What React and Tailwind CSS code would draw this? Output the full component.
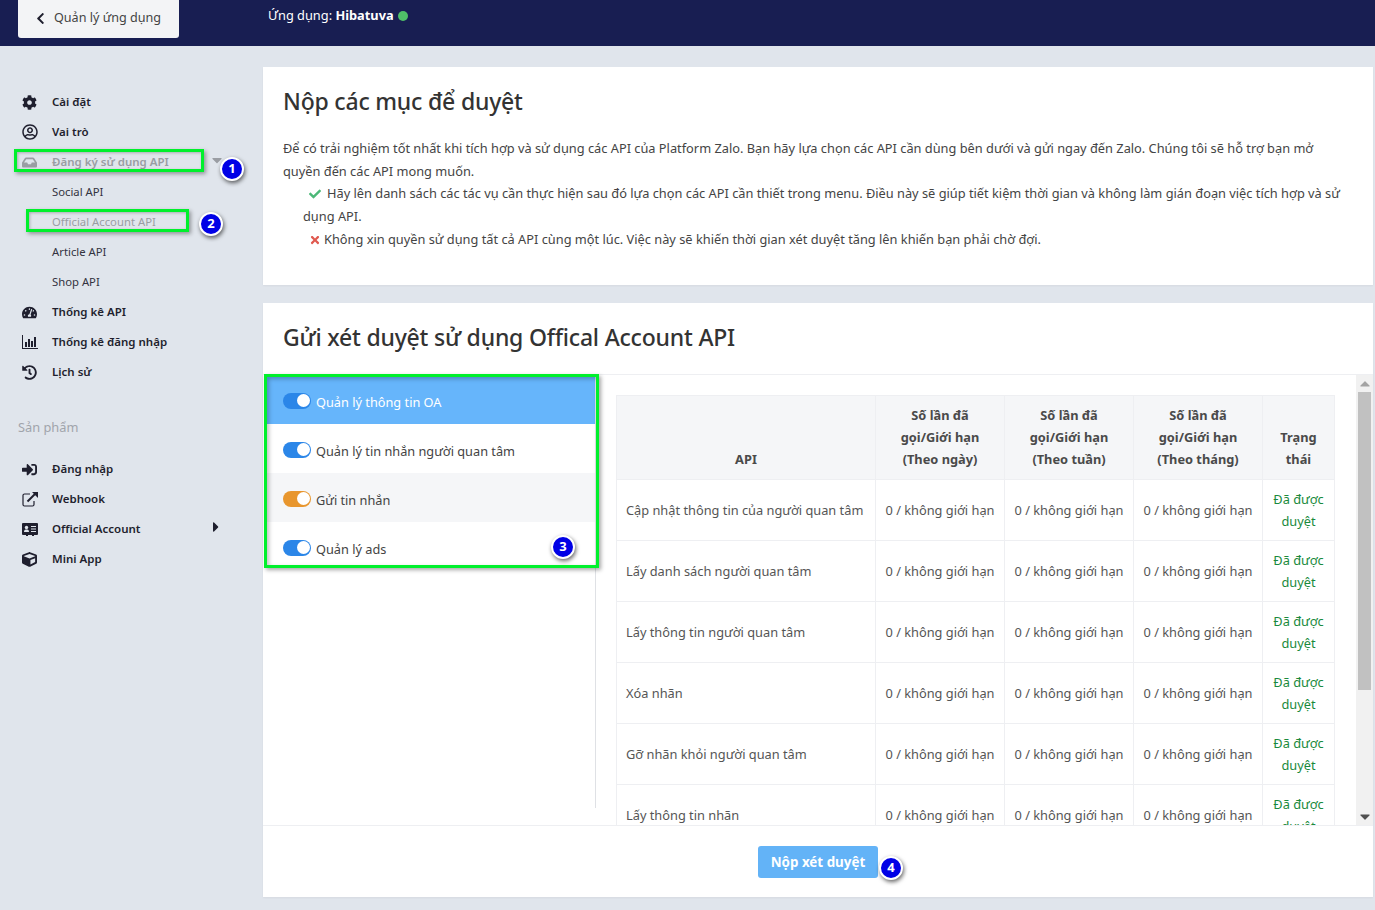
import { FaChevronLeft, FaCog, FaRegUserCircle, FaInbox, FaTachometerAlt, FaHistory, FaSignInAlt, FaCube, FaCheck, FaTimes, FaCaretDown, FaCaretRight, FaCaretUp } from 'react-icons/fa';

const font = { fontFamily: '"Noto Sans", sans-serif' };

const ChartIcon = () => (
  <svg width="16" height="14" viewBox="0 0 16 14" fill="#1f1f2e">
    <rect x="0" y="0" width="1" height="14" />
    <rect x="0" y="13" width="16" height="1" />
    <rect x="3" y="7" width="2" height="5" />
    <rect x="6" y="4" width="2" height="8" />
    <rect x="9" y="6" width="2" height="6" />
    <rect x="12" y="2" width="2" height="10" />
  </svg>
);

const WebhookIcon = () => (
  <svg width="16" height="16" viewBox="0 0 16 16" fill="none" stroke="#1f1f2e" strokeWidth="1.2">
    <path d="M8 3H2.500A1.500 1.500 0 0 0 1 4.500v9A1.500 1.500 0 0 0 2.500 15h8a1.500 1.500 0 0 0 1.500-1.500V10" />
    <path d="M5.500 10.500 14 2" strokeWidth="2" />
    <path d="M10 1h6v6z" fill="#1f1f2e" stroke="none" />
  </svg>
);

const CardIcon = () => (
  <svg width="16" height="13" viewBox="0 0 16 13" fill="#1f1f2e">
    <path d="M1 0h14a1 1 0 0 1 1 1v10a1 1 0 0 1-1 1h-3v1h-2v-1H6v1H4v-1H1a1 1 0 0 1-1-1V1a1 1 0 0 1 1-1z" />
    <circle cx="4.500" cy="4.500" r="1.700" fill="#e0e5ec" />
    <path d="M2 9c0-2 1-2.500 2.500-2.500S7 7 7 9z" fill="#e0e5ec" />
    <rect x="9" y="3" width="5" height="1" fill="#e0e5ec" />
    <rect x="9" y="5.500" width="5" height="1" fill="#e0e5ec" />
    <rect x="9" y="8" width="5" height="1" fill="#e0e5ec" />
  </svg>
);

function NavItem({ icon, label, faded, caret }) {
  return (
    <div className={`h-[30px] flex items-center text-[11.500px] font-semibold ${faded ? 'text-[#9a9da3]' : 'text-[#1f1f2e]'}`}>
      <span className="w-[52px] pl-[22px] flex items-center text-[15px]">{icon}</span>
      <span>{label}</span>
      {caret}
    </div>
  );
}

function SubItem({ label, faded }) {
  return <div className={`h-[30px] flex items-center pl-[52px] text-[11.300px] ${faded ? 'text-[#9a9da3]' : 'text-[#33333f]'}`}>{label}</div>;
}

function Toggle({ color }) {
  return (
    <span className={`w-7 h-4 rounded-full flex items-center justify-end pr-[1.500px] shrink-0 ${color}`}>
      <span className="w-[13px] h-[13px] rounded-full bg-white" />
    </span>
  );
}

function Badge({ n, className }) {
  return (
    <div className={`absolute w-6 h-6 rounded-full bg-[#0000e6] border-2 border-white text-white text-[13px] font-bold flex items-center justify-center shadow-[1px_2px_4px_rgba(0,0,0,0.6)] ${className}`}>
      {n}
    </div>
  );
}

const groups = [
  { label: 'Quản lý thông tin OA', cls: 'bg-[#66b5fb] text-white', toggle: 'bg-[#2b86e8]' },
  { label: 'Quản lý tin nhắn người quan tâm', cls: 'bg-white text-[#444]', toggle: 'bg-[#2b86e8]' },
  { label: 'Gửi tin nhắn', cls: 'bg-[#f5f6f8] text-[#444]', toggle: 'bg-[#e8962e]' },
  { label: 'Quản lý ads', cls: 'bg-white text-[#444]', toggle: 'bg-[#2b86e8]' },
];

const rows = [
  'Cập nhật thông tin của người quan tâm',
  'Lấy danh sách người quan tâm',
  'Lấy thông tin người quan tâm',
  'Xóa nhãn',
  'Gỡ nhãn khỏi người quan tâm',
  'Lấy thông tin nhãn',
];

const limit = '0 / không giới hạn';

export default function App() {
  return (
    <div style={font} className="relative h-[910px] overflow-hidden bg-[#e0e5ec] text-[12.800px]">
      <header className="h-[46px] bg-[#181e52] flex items-start pl-[18px]">
        <button className="w-[161px] h-[38px] bg-[#f3f4f6] rounded-b-[3px] flex items-center pl-[16px] pb-[2px] text-[12.600px] text-[#444]">
          <FaChevronLeft className="text-[13px] text-[#1f1f2e] mr-[7px]" />
          Quản lý ứng dụng
        </button>
        <div className="ml-[89px] h-[32px] flex items-center text-[12.800px] text-white">
          Ứng dụng:&nbsp;<b className="font-bold">Hibatuva</b>
          <span className="ml-1 w-[10px] h-[10px] rounded-full bg-[#4fc068]" />
        </div>
      </header>

      <div className="flex">
        <aside className="w-[263px] shrink-0 pt-[41px]">
          <NavItem icon={<FaCog />} label="Cài đặt" />
          <NavItem icon={<FaRegUserCircle className="text-[16px]" />} label="Vai trò" />
          <NavItem icon={<FaInbox />} label="Đăng ký sử dụng API" faded caret={<FaCaretDown className="ml-10 text-[#9a9da3] text-[16px] -mt-1" />} />
          <SubItem label="Social API" />
          <SubItem label="Official Account API" faded />
          <SubItem label="Article API" />
          <SubItem label="Shop API" />
          <NavItem icon={<FaTachometerAlt />} label="Thống kê API" />
          <NavItem icon={<ChartIcon />} label="Thống kê đăng nhập" />
          <NavItem icon={<FaHistory />} label="Lịch sử" />
          <div className="pl-[18px] mt-[30px] mb-[17px] h-5 leading-5 text-[12.800px] text-[#a0a4ab]">Sản phẩm</div>
          <NavItem icon={<FaSignInAlt />} label="Đăng nhập" />
          <NavItem icon={<WebhookIcon />} label="Webhook" />
          <NavItem icon={<CardIcon />} label="Official Account" caret={<FaCaretRight className="ml-[67px] text-[16px] -mt-1" />} />
          <NavItem icon={<FaCube />} label="Mini App" />
        </aside>

        <main className="w-[1110px] pt-[21px]">
          <section className="h-[218px] bg-white px-5 pt-[18px] shadow-[0_1px_2px_rgba(0,0,0,0.05)]">
            <h1 className="text-[23px] tracking-[-0.200px] leading-[32px] font-medium text-[#333]">Nộp các mục để duyệt</h1>
            <div className="mt-5 leading-[22.500px] text-[#444] pr-2">
              <p>Để có trải nghiệm tốt nhất khi tích hợp và sử dụng các API của Platform Zalo. Bạn hãy lựa chọn các API cần dùng bên dưới và gửi ngay đến Zalo. Chúng tôi sẽ hỗ trợ bạn mở quyền đến các API mong muốn.</p>
              <p className="pl-5 indent-[6px]"><FaCheck className="inline text-[12px] text-[#4cb878] mr-[6px] -mt-[2px]" />Hãy lên danh sách các tác vụ cần thực hiện sau đó lựa chọn các API cần thiết trong menu. Điều này sẽ giúp tiết kiệm thời gian và không làm gián đoạn việc tích hợp và sử dụng API.</p>
              <p className="pl-5 indent-[6px] mt-[1px]"><FaTimes className="inline text-[12px] text-[#e05a50] mr-[3px] -mt-[2px]" />Không xin quyền sử dụng tất cả API cùng một lúc. Việc này sẽ khiến thời gian xét duyệt tăng lên khiến bạn phải chờ đợi.</p>
            </div>
          </section>

          <section className="mt-[18px] h-[594px] bg-white flex flex-col shadow-[0_1px_2px_rgba(0,0,0,0.05)]">
            <h2 className="h-[72px] shrink-0 px-5 pb-[2px] flex items-center text-[23px] tracking-[-0.200px] font-medium text-[#333] border-b border-[#eeeff2]">Gửi xét duyệt sử dụng Offical Account API</h2>
            <div className="flex-1 flex min-h-0 border-b border-[#eeeff2]">
              <div className="w-[333px] shrink-0 h-[433px] pl-px border-r border-[#dfe1e5]">
                {groups.map((g) => (
                  <div key={g.label} className={`h-[49px] flex items-center pl-[19px] pt-[2px] gap-[5px] text-[12.750px] ${g.cls}`}>
                    <Toggle color={g.toggle} />
                    <span className="pt-1">{g.label}</span>
                  </div>
                ))}
              </div>
              <div className="flex-1 overflow-hidden pl-5 pt-5">
                <table className="table-fixed w-[718px] border-collapse text-[12.800px] text-[#555]">
                  <colgroup>
                    <col className="w-[259px]" />
                    <col className="w-[129px]" />
                    <col className="w-[129px]" />
                    <col className="w-[129px]" />
                    <col className="w-[72px]" />
                  </colgroup>
                  <thead>
                    <tr className="h-[84px] bg-[#f5f6f8] font-bold text-[#4a4a4a] leading-[22px] text-center align-bottom">
                      <th className="border border-[#eeeff2] pb-[9px] font-bold">API</th>
                      {['ngày', 'tuần', 'tháng'].map((t) => (
                        <th key={t} className="border border-[#eeeff2] pb-[9px] font-bold">Số lần đã<br />gọi/Giới hạn<br />(Theo {t})</th>
                      ))}
                      <th className="border border-[#eeeff2] pb-[9px] font-bold">Trạng<br />thái</th>
                    </tr>
                  </thead>
                  <tbody>
                    {rows.map((r) => (
                      <tr key={r} className="h-[61px]">
                        <td className="border border-[#eeeff2] px-[9px] pt-[2px]">{r}</td>
                        <td className="border border-[#eeeff2] text-center pt-[2px]">{limit}</td>
                        <td className="border border-[#eeeff2] text-center pt-[2px]">{limit}</td>
                        <td className="border border-[#eeeff2] text-center pt-[2px]">{limit}</td>
                        <td className="border border-[#eeeff2] text-center text-[#1a8a3c] leading-[22px] px-2">Đã được duyệt</td>
                      </tr>
                    ))}
                  </tbody>
                </table>
              </div>
              <div className="w-[17px] shrink-0 bg-[#f1f1f1] flex flex-col items-center">
                <FaCaretUp className="h-[17px] text-[10px] text-[#a3a3a3]" />
                <div className="w-[13px] h-[298px] bg-[#c1c1c1]" />
                <FaCaretDown className="h-[17px] mt-auto text-[10px] text-[#505050]" />
              </div>
            </div>
            <div className="h-[71px] shrink-0 flex justify-center items-center pt-[1px]">
              <button className="w-[120px] h-8 rounded-[3px] bg-[#63b3f7] text-[13.400px] font-bold text-white">Nộp xét duyệt</button>
            </div>
          </section>
        </main>
      </div>

      {/* annotations drawn on top of the screenshot */}
      <div className="absolute left-[14px] top-[149px] w-[190px] h-[23px] border-[3px] border-[#00f02c] shadow-[2px_2px_4px_rgba(0,0,0,0.35),inset_1px_1px_3px_rgba(0,0,0,0.25)]" />
      <div className="absolute left-[26px] top-[209px] w-[163px] h-[23px] border-[3px] border-[#00f02c] shadow-[2px_2px_4px_rgba(0,0,0,0.35),inset_1px_1px_3px_rgba(0,0,0,0.25)]" />
      <div className="absolute left-[264px] top-[374px] w-[335px] h-[194px] border-[3px] border-[#00f02c] shadow-[2px_2px_4px_rgba(0,0,0,0.35),inset_2px_2px_4px_rgba(0,0,0,0.25)]" />
      <Badge n="1" className="left-[220px] top-[157px]" />
      <Badge n="2" className="left-[199px] top-[212px]" />
      <Badge n="3" className="left-[551px] top-[535px]" />
      <Badge n="4" className="left-[879px] top-[856px]" />
    </div>
  );
}
